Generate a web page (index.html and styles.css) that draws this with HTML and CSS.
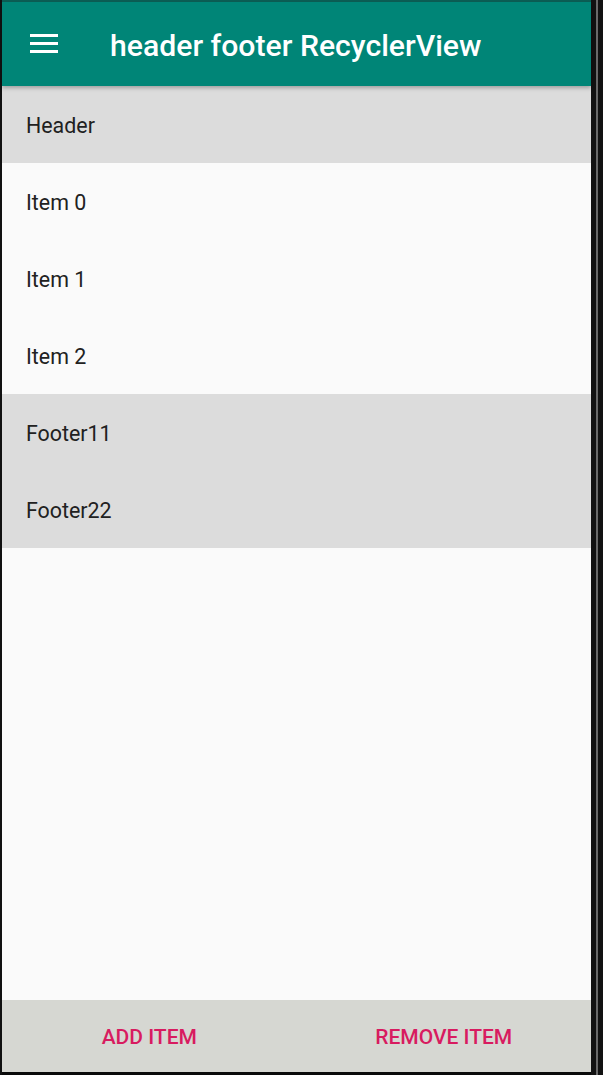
FILE: index.html
```html
<!DOCTYPE html>
<html>
<head>
<meta charset="utf-8">
<link rel="stylesheet" href="styles.css">
</head>
<body>
<div class="device">
  <div class="edge-left"></div>
  <div class="screen">
    <div class="statusline"></div>
    <header class="toolbar">
      <svg class="menu" width="28" height="20" viewBox="0 0 28 20">
        <rect x="0" y="1" width="28" height="3" fill="#fff"/>
        <rect x="0" y="9" width="28" height="3" fill="#fff"/>
        <rect x="0" y="17" width="28" height="3" fill="#fff"/>
      </svg>
      <h1 class="title">header footer RecyclerView</h1>
    </header>
    <main class="list">
      <div class="row row-grey">Header</div>
      <div class="row">Item 0</div>
      <div class="row">Item 1</div>
      <div class="row">Item 2</div>
      <div class="row row-grey">Footer11</div>
      <div class="row row-grey">Footer22</div>
    </main>
    <footer class="actions">
      <button class="action">ADD ITEM</button>
      <button class="action">REMOVE ITEM</button>
    </footer>
  </div>
  <div class="edge-right"><span class="stripe"></span></div>
</div>
</body>
</html>
```
FILE: styles.css
```css
html, body {
  margin: 0;
  padding: 0;
  background: #000;
}
.device {
  display: flex;
  width: 603px;
  height: 1075px;
  background: #0a0a0a;
}
.edge-left {
  width: 2px;
  background: #111;
}
.screen {
  width: 589px;
  height: 1072px;
  display: flex;
  flex-direction: column;
  background: #fafafa;
  font-family: Roboto, "Liberation Sans", sans-serif;
}
.edge-right {
  width: 12px;
  display: flex;
  justify-content: flex-start;
  background: #121212;
}
.stripe {
  margin-left: 5px;
  width: 2px;
  background: #6a6a6a;
}
.statusline {
  height: 2px;
  background: #0c5f56;
}
.toolbar {
  height: 84px;
  background: #008577;
  display: flex;
  align-items: center;
  box-shadow: 0 2px 4px rgba(0,0,0,0.28);
  position: relative;
  z-index: 1;
}
.menu {
  margin-left: 28px;
  margin-top: -2px;
}
.title {
  margin: 2px 0 0 52px;
  color: #fff;
  font-size: 30.2px;
  font-weight: 500;
  letter-spacing: 0;
}
.list {
  flex: 1;
  display: flex;
  flex-direction: column;
}
.row {
  height: 77px;
  box-sizing: border-box;
  padding-top: 2px;
  display: flex;
  align-items: center;
  padding-left: 24px;
  font-size: 21.4px;
  color: #212121;
}
.row-grey {
  background: #dcdcdc;
}
.actions {
  height: 72px;
  background: #d6d7d2;
  display: flex;
}
.action {
  flex: 1;
  border: 0;
  background: transparent;
  color: #d81b60;
  font-family: Roboto, "Liberation Sans", sans-serif;
  font-size: 21px;
  font-weight: 500;
  padding: 2px 0 0;
  margin: 0;
}
```
